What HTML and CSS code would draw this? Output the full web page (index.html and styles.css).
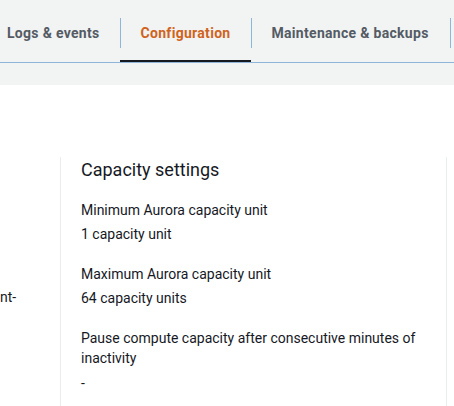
FILE: index.html
```html
<!DOCTYPE html>
<html>
<head>
<meta charset="utf-8">
<link rel="stylesheet" href="styles.css">
</head>
<body>
<div class="tabbar">
  <ul class="tabs">
    <li class="tab">Logs &amp; events</li>
    <li class="tab active">Configuration</li>
    <li class="tab">Maintenance &amp; backups</li>
  </ul>
</div>
<div class="gap"></div>
<div class="content">
  <div class="col left">
    <div class="frag">nt-</div>
  </div>
  <div class="col right">
    <h2 class="heading">Capacity settings</h2>
    <div class="field">
      <div class="label">Minimum Aurora capacity unit</div>
      <div class="value">1 capacity unit</div>
    </div>
    <div class="field">
      <div class="label">Maximum Aurora capacity unit</div>
      <div class="value">64 capacity units</div>
    </div>
    <div class="field">
      <div class="label">Pause compute capacity after consecutive minutes of inactivity</div>
      <div class="value">-</div>
    </div>
  </div>
  <div class="col edge"></div>
</div>
</body>
</html>
```

FILE: styles.css
```css
* { box-sizing: border-box; }
html, body { margin: 0; padding: 0; }
body {
  width: 454px;
  height: 406px;
  overflow: hidden;
  background: #ffffff;
  font-family: Roboto, "Noto Sans", sans-serif;
  color: #16191f;
}
.tabbar {
  background: #f2f3f3;
  border-bottom: 1px solid #8fb6d8;
  height: 63px;
}
.tabs {
  list-style: none;
  margin: 0 0 0 -14px;
  padding: 0;
  display: flex;
  height: 62px;
  white-space: nowrap;
}
.tab {
  position: relative;
  padding: 6px 20px 0 21px;
  display: flex;
  align-items: center;
  font-size: 14px;
  font-weight: 700;
  letter-spacing: 0.3px;
  color: #545b64;
  border-bottom: 2px solid transparent;
  height: 62px;
}
.tab + .tab::before {
  content: "";
  position: absolute;
  left: 0;
  top: 18px;
  height: 30px;
  width: 1px;
  background: #8fb6d8;
}
.tab:last-child::after {
  content: "";
  position: absolute;
  right: -2px;
  top: 18px;
  height: 30px;
  width: 1px;
  background: #8fb6d8;
}
.tab.active {
  color: #d0631c;
  border-bottom-color: #16191f;
}
.gap {
  background: #f2f3f3;
  height: 22px;
}
.content {
  display: grid;
  grid-template-columns: 60px 387px 7px;
  padding-top: 72px;
  height: 321px;
}
.col.left {
  position: relative;
}
.frag {
  position: absolute;
  left: 0;
  top: 130px;
  font-size: 14px;
  line-height: 20px;
}
.col.right {
  border-left: 1px solid #eaeded;
  border-right: 1px solid #eaeded;
  padding-left: 20px;
  padding-right: 20px;
}
.heading {
  margin: 1px 0 18px;
  font-size: 18px;
  font-weight: 400;
  line-height: 24px;
}
.field { margin-bottom: 20px; }
.label, .value {
  font-size: 14px;
  line-height: 20px;
}
.value { margin-top: 4px; }
.field:last-child .value { margin-top: 5px; }
```
